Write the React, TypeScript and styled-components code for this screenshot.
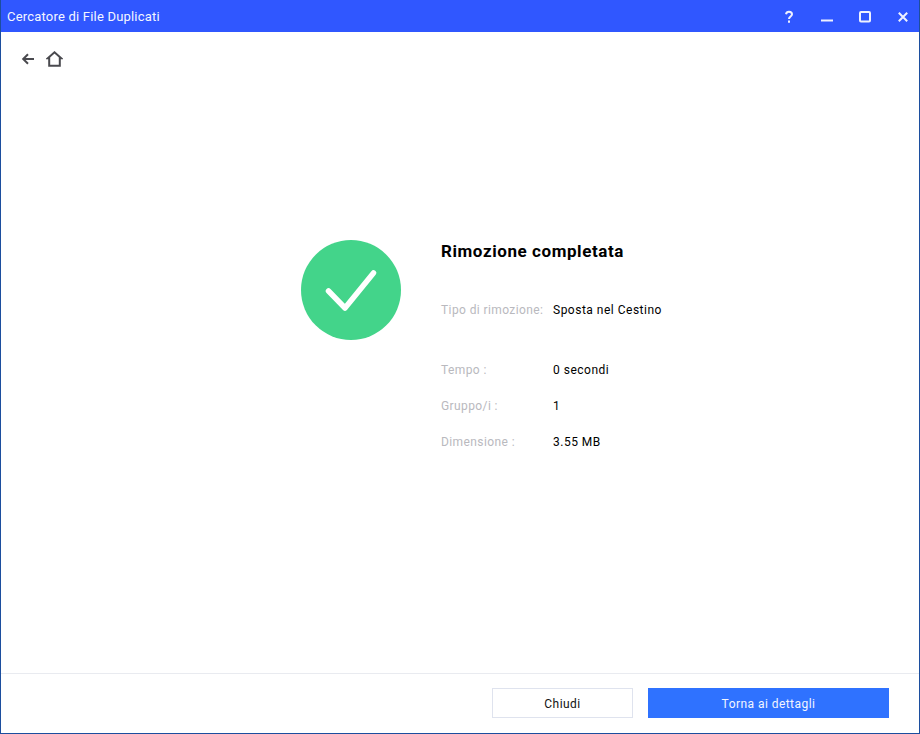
import React from 'react';
import styled, { createGlobalStyle } from 'styled-components';

const GlobalStyle = createGlobalStyle`
  html, body {
    margin: 0;
    padding: 0;
    background: #fff;
  }
  body {
    font-family: "Roboto", "Liberation Sans", sans-serif;
  }
`;

const rows = [
  { label: 'Tempo :', value: '0 secondi' },
  { label: 'Gruppo/i :', value: '1' },
  { label: 'Dimensione :', value: '3.55 MB' },
];

export default function App() {
  return (
    <>
      <GlobalStyle />
      <Window>
        <TitleBar>
          <AppTitle>Cercatore di File Duplicati</AppTitle>
          <WindowControls>
            <ControlButton aria-label="Aiuto">
              <svg width="14" height="16" viewBox="0 0 14 16" fill="none" stroke="#eef1ff" strokeWidth="2">
                <path d="M4 6.2a3 3 0 0 1 3-2.4c1.9 0 3 1 3 2.5 0 2.2-3 2.3-3 4.7" />
                <path d="M7 12.6v2.2" />
              </svg>
            </ControlButton>
            <ControlButton aria-label="Riduci">
              <svg width="14" height="14" viewBox="0 0 14 14" fill="none" stroke="#eef1ff" strokeWidth="2">
                <path d="M1 11.5h12" />
              </svg>
            </ControlButton>
            <ControlButton aria-label="Ingrandisci">
              <svg width="14" height="14" viewBox="0 0 14 14" fill="none" stroke="#eef1ff" strokeWidth="2">
                <rect x="2" y="3" width="10" height="9.5" rx="1" />
              </svg>
            </ControlButton>
            <ControlButton aria-label="Chiudi">
              <svg width="14" height="14" viewBox="0 0 14 14" fill="none" stroke="#eef1ff" strokeWidth="2">
                <path d="M2.8 3.8l8.4 8.4M11.2 3.8l-8.4 8.4" />
              </svg>
            </ControlButton>
          </WindowControls>
        </TitleBar>

        <NavBar>
          <NavIcon aria-label="Indietro">
            <svg width="14" height="14" viewBox="0 0 14 14" fill="none" stroke="#4a4a4f" strokeWidth="2">
              <path d="M13 7H2.5M7 2.2L2.2 7 7 11.8" />
            </svg>
          </NavIcon>
          <NavIcon aria-label="Home">
            <svg width="17" height="16" viewBox="0 0 17 16" fill="none" stroke="#4a4a4f" strokeWidth="2">
              <path d="M1.8 7.2L8.5 1.3l6.7 5.9h-1.4v7.6H3.2V7.2z" />
            </svg>
          </NavIcon>
        </NavBar>

        <Content>
          <SuccessBadge>
            <svg width="100" height="100" viewBox="0 0 100 100" fill="none">
              <circle cx="50" cy="50" r="50" fill="#43d48a" />
              <path d="M27.5 51L44 68 72.5 33" stroke="#fff" strokeWidth="5.5" strokeLinecap="round" strokeLinejoin="round" />
            </svg>
          </SuccessBadge>
          <Summary>
            <Heading>Rimozione completata</Heading>
            <Row>
              <Label>Tipo di rimozione:</Label>
              <Value>Sposta nel Cestino</Value>
            </Row>
            <Stats>
              {rows.map((row) => (
                <Row key={row.label}>
                  <Label>{row.label}</Label>
                  <Value>{row.value}</Value>
                </Row>
              ))}
            </Stats>
          </Summary>
        </Content>

        <Footer>
          <Button>Chiudi</Button>
          <Button $primary>Torna ai dettagli</Button>
        </Footer>
      </Window>
    </>
  );
}

const Window = styled.div`
  box-sizing: border-box;
  width: 920px;
  height: 734px;
  display: flex;
  flex-direction: column;
  background: #fff;
  border: 1px solid #1c4e9e;
  border-top: 0;
`;

const TitleBar = styled.div`
  height: 32px;
  flex: none;
  display: flex;
  align-items: center;
  justify-content: space-between;
  background: #3057ff;
  padding: 0 9px 0 6px;
`;

const AppTitle = styled.div`
  color: #f4f6ff;
  font-size: 13px;
  letter-spacing: 0.2px;
`;

const WindowControls = styled.div`
  display: flex;
  align-items: center;
  gap: 24px;
`;

const ControlButton = styled.button`
  width: 14px;
  height: 16px;
  padding: 0;
  border: 0;
  background: none;
  display: flex;
  align-items: center;
  justify-content: center;
`;

const NavBar = styled.div`
  flex: none;
  display: flex;
  align-items: center;
  gap: 11px;
  padding: 19px 0 0 20px;
`;

const NavIcon = styled.button`
  padding: 0;
  border: 0;
  background: none;
  display: flex;
`;

const Content = styled.main`
  flex: 1;
  display: flex;
  align-items: flex-start;
  padding: 173px 0 0 300px;
`;

const SuccessBadge = styled.div`
  width: 100px;
  height: 100px;
  margin-right: 40px;
  flex: none;
  svg {
    display: block;
  }
`;

const Summary = styled.div`
  display: flex;
  flex-direction: column;
`;

const Heading = styled.h1`
  margin: 0 0 40px;
  font-size: 17px;
  line-height: 22px;
  font-weight: 700;
  color: #000;
  letter-spacing: 0.58px;
`;

const Stats = styled.div`
  display: flex;
  flex-direction: column;
  gap: 20px;
  margin-top: 44px;
`;

const Row = styled.div`
  display: flex;
  font-size: 12px;
  line-height: 16px;
`;

const Label = styled.span`
  width: 112px;
  flex: none;
  color: #b9b9be;
  letter-spacing: 0.4px;
`;

const Value = styled.span`
  color: #000;
  letter-spacing: 0.5px;
`;

const Footer = styled.footer`
  flex: none;
  height: 60px;
  box-sizing: border-box;
  border-top: 1px solid #e9ebf0;
  display: flex;
  justify-content: flex-end;
  gap: 15px;
  padding: 14px 30px 0 0;
`;

const Button = styled.button<{ $primary?: boolean }>`
  box-sizing: border-box;
  width: ${(p) => (p.$primary ? '241px' : '141px')};
  height: 30px;
  padding: 2px 0 0;
  font-family: inherit;
  font-size: 12px;
  letter-spacing: 0.45px;
  color: ${(p) => (p.$primary ? '#f2f5ff' : '#111')};
  background: ${(p) => (p.$primary ? '#2f72ff' : '#fff')};
  border: ${(p) => (p.$primary ? '0' : '1px solid #dfe3ee')};
`;
